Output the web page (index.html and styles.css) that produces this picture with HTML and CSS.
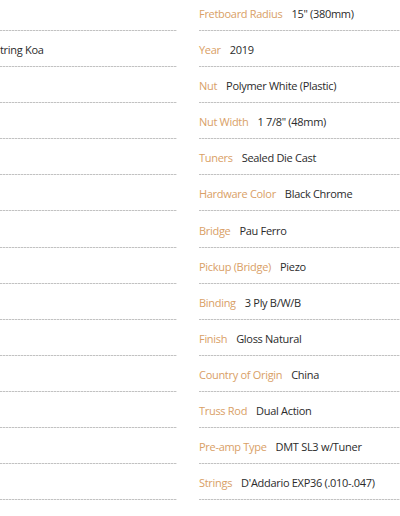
FILE: index.html
```html
<!DOCTYPE html>
<html>
<head>
<meta charset="utf-8">
<link rel="stylesheet" href="styles.css">
</head>
<body>
<div class="specs">
  <ul class="col col-left">
    <li class="row"></li>
    <li class="row"><span class="val">tring Koa</span></li>
    <li class="row"></li>
    <li class="row"></li>
    <li class="row"></li>
    <li class="row"></li>
    <li class="row"></li>
    <li class="row"></li>
    <li class="row"></li>
    <li class="row"></li>
    <li class="row"></li>
    <li class="row"></li>
    <li class="row"></li>
    <li class="row"></li>
  </ul>
  <ul class="col col-right">
    <li class="row"><span class="lbl">Fretboard Radius</span><span class="val">15" (380mm)</span></li>
    <li class="row"><span class="lbl">Year</span><span class="val">2019</span></li>
    <li class="row"><span class="lbl">Nut</span><span class="val">Polymer White (Plastic)</span></li>
    <li class="row"><span class="lbl">Nut Width</span><span class="val">1 7/8" (48mm)</span></li>
    <li class="row"><span class="lbl">Tuners</span><span class="val">Sealed Die Cast</span></li>
    <li class="row"><span class="lbl">Hardware Color</span><span class="val">Black Chrome</span></li>
    <li class="row"><span class="lbl">Bridge</span><span class="val">Pau Ferro</span></li>
    <li class="row"><span class="lbl">Pickup (Bridge)</span><span class="val">Piezo</span></li>
    <li class="row"><span class="lbl">Binding</span><span class="val">3 Ply B/W/B</span></li>
    <li class="row"><span class="lbl">Finish</span><span class="val">Gloss Natural</span></li>
    <li class="row"><span class="lbl">Country of Origin</span><span class="val">China</span></li>
    <li class="row"><span class="lbl">Truss Rod</span><span class="val">Dual Action</span></li>
    <li class="row"><span class="lbl">Pre-amp Type</span><span class="val">DMT SL3 w/Tuner</span></li>
    <li class="row"><span class="lbl">Strings</span><span class="val">D'Addario EXP36 (.010-.047)</span></li>
  </ul>
</div>
</body>
</html>
```
FILE: styles.css
```css
html, body {
  margin: 0;
  padding: 0;
  background: #fff;
  overflow: hidden;
}
.specs {
  display: flex;
  gap: 22px;
  margin-top: -5px;
  width: 400px;
  font-family: "Open Sans", "Noto Sans", sans-serif;
  font-size: 11px;
  letter-spacing: -0.3px;
}
.col {
  list-style: none;
  margin: 0;
  padding: 0;
}
.col-left {
  width: 177px;
  flex: none;
}
.col-right {
  flex: 1;
  min-width: 0;
}
.row {
  position: relative;
  display: flex;
  align-items: center;
  height: 16.08px;
  padding: 11px 0 9px;
  white-space: nowrap;
  line-height: 16px;
}
.row::after {
  content: "";
  position: absolute;
  left: 0;
  right: 0;
  bottom: 0;
  height: 1px;
  background: repeating-linear-gradient(90deg, #c2c2c2 0 2px, #e6e6e6 2px 3px);
}
.lbl {
  color: #d9a066;
  margin-right: 9px;
}
.val {
  color: #2b2b2b;
}
```
